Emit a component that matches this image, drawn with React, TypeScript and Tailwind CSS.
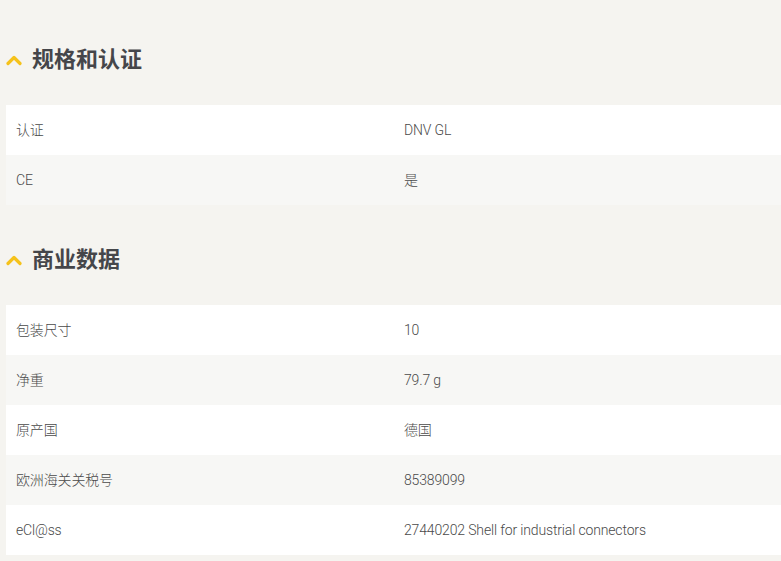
const sections = [
  {
    title: '规格和认证',
    rows: [
      ['认证', 'DNV GL'],
      ['CE', '是'],
    ],
  },
  {
    title: '商业数据',
    rows: [
      ['包装尺寸', '10'],
      ['净重', '79.7 g'],
      ['原产国', '德国'],
      ['欧洲海关关税号', '85389099'],
      ['eCl@ss', '27440202 Shell for industrial connectors'],
    ],
  },
];

const Chevron = () => (
  <svg width="16" height="12" viewBox="0 0 16 12" className="shrink-0">
    <path d="M2 9.5 L8 3.5 L14 9.5" fill="none" stroke="#f5c21b" strokeWidth="3.2" strokeLinecap="round" strokeLinejoin="round" />
  </svg>
);

export default function App() {
  return (
    <div
      className="min-h-[561px] bg-[#f5f4f0] pt-[40px] pl-[6px] overflow-hidden"
      style={{ fontFamily: 'Roboto, "Noto Sans CJK SC", sans-serif' }}
    >
      {sections.map((s, i) => (
        <section key={s.title} className={i > 0 ? 'mt-[35px]' : ''}>
          <div className="flex items-center gap-[10px] h-[40px]">
            <Chevron />
            <h2 className="text-[22px] font-bold text-[#45464a] leading-none">{s.title}</h2>
          </div>
          <div className="mt-[25px] w-[776px]">
            {s.rows.map(([k, v], j) => (
              <div
                key={k}
                className={`grid grid-cols-2 h-[50px] items-center text-[14px] tracking-[-0.15px] font-light text-[#4a4a4a] ${
                  j % 2 === 0 ? 'bg-white' : 'bg-[#f7f7f5]'
                }`}
              >
                <div className="px-[10px] pt-[1px]">{k}</div>
                <div className="px-[10px] pt-[1px]">{v}</div>
              </div>
            ))}
          </div>
        </section>
      ))}
    </div>
  );
}
